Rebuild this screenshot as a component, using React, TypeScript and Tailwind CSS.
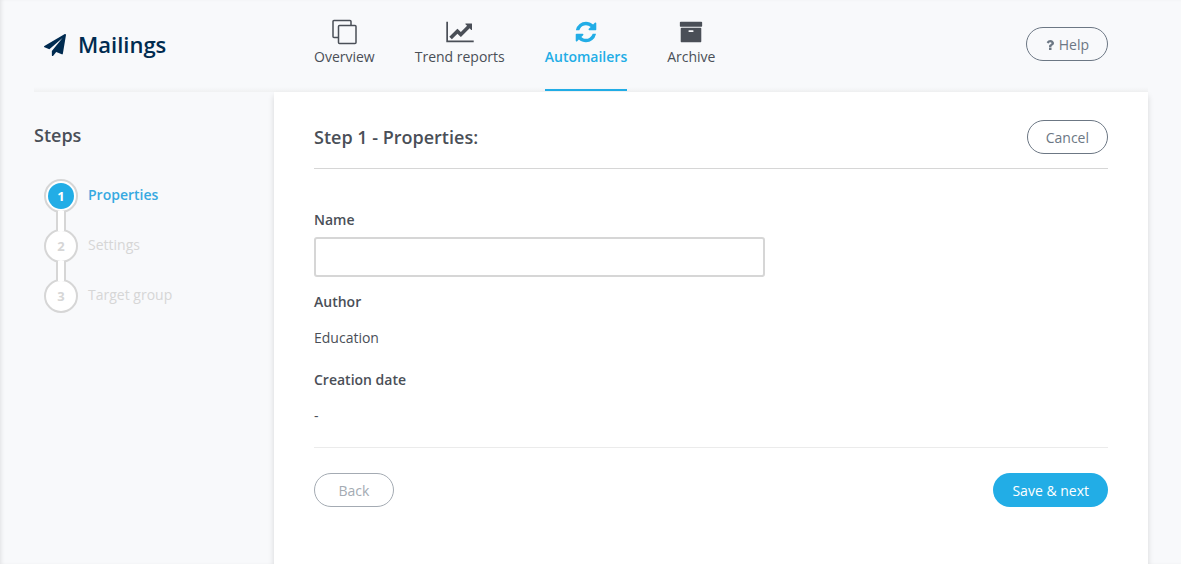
import { useState } from "react";
import type { ReactNode } from "react";

const STEPS = ["Properties", "Settings", "Target group"];

function PaperPlaneIcon() {
  return (
    <svg viewBox="0 0 1792 1792" className="h-[22px] w-[22px]" fill="currentColor" aria-hidden="true">
      <path d="M1764 11q33 24 27 64l-256 1536q-5 29-32 45-14 8-31 8-11 0-24-5l-453-185-242 295q-18 23-49 23-13 0-22-4-19-7-30.500-23.500t-11.500-36.500v-349l864-1059-1069 925-395-162q-37-14-40-55-2-40 32-59l1664-960q15-9 32-9 20 0 36 11z" />
    </svg>
  );
}

function OverviewIcon() {
  return (
    <svg viewBox="0 0 26 26" className="h-[26px] w-[26px]" fill="none" stroke="currentColor" strokeWidth="1.500" aria-hidden="true">
      <path d="M7 18.500H3a1 1 0 0 1-1-1v-15a1 1 0 0 1 1-1h16a1 1 0 0 1 1 1V6" />
      <rect x="7.500" y="6.500" width="17.500" height="18" rx="1" />
    </svg>
  );
}

function TrendIcon() {
  return (
    <svg viewBox="0 0 2048 1792" className="h-6 w-7" fill="currentColor" aria-hidden="true">
      <path d="M2048 1536v128h-2048v-1536h128v1408h1920zm-128-1248v435q0 21-19.500 29.500t-35.500-7.500l-121-121-633 633q-10 10-23 10t-23-10l-233-233-416 416-192-192 585-585q10-10 23-10t23 10l233 233 464-464-121-121q-16-16-7.500-35.500t29.500-19.500h435q14 0 23 9t9 23z" />
    </svg>
  );
}

function RefreshIcon() {
  return (
    <svg viewBox="0 0 1792 1792" className="h-6 w-6" fill="currentColor" aria-hidden="true">
      <path d="M1639 1056q0 5-1 7-64 268-268 434.500t-478 166.500q-146 0-282.500-55t-243.500-157l-129 129q-19 19-45 19t-45-19-19-45v-448q0-26 19-45t45-19h448q26 0 45 19t19 45-19 45l-137 137q71 66 161 102t187 36q134 0 250-65t186-179q11-17 53-117 8-23 30-23h192q13 0 22.500 9.500t9.500 22.500zm25-800v448q0 26-19 45t-45 19h-448q-26 0-45-19t-19-45 19-45l138-138q-148-137-349-137-134 0-250 65t-186 179q-11 17-53 117-8 23-30 23h-199q-13 0-22.500-9.500t-9.500-22.500v-7q65-268 270-434.500t480-166.500q146 0 284 55.500t245 156.500l130-129q19-19 45-19t45 19 19 45z" />
    </svg>
  );
}

function ArchiveIcon() {
  return (
    <svg viewBox="0 0 1792 1792" className="h-6 w-6" fill="currentColor" aria-hidden="true">
      <path d="M1088 832q0-26-19-45t-45-19h-256q-26 0-45 19t-19 45 19 45 45 19h256q26 0 45-19t19-45zm576-192v960q0 26-19 45t-45 19h-1408q-26 0-45-19t-19-45v-960q0-26 19-45t45-19h1408q26 0 45 19t19 45zm64-448v256q0 26-19 45t-45 19h-1536q-26 0-45-19t-19-45v-256q0-26 19-45t45-19h1536q26 0 45 19t19 45z" />
    </svg>
  );
}

function QuestionIcon() {
  return (
    <svg viewBox="0 0 1792 1792" className="h-3.5 w-3.5" fill="currentColor" aria-hidden="true">
      <path d="M1088 1256v240q0 16-12 28t-28 12h-240q-16 0-28-12t-12-28v-240q0-16 12-28t28-12h240q16 0 28 12t12 28zm316-600q0 54-15.500 101t-35 76.500-55 59.500-57.500 43.500-61 35.500q-41 23-68.500 65t-27.500 67q0 17-12 32.500t-28 15.500h-240q-15 0-25.500-18.500t-10.500-37.500v-45q0-83 65-156.500t143-108.500q59-27 84-56t25-76q0-42-46.500-74t-107.500-32q-65 0-108 29-35 25-107 115-13 16-31 16-12 0-25-8l-164-125q-13-10-15.500-25t5.500-28q160-266 464-266 80 0 161 31t146 83 106 127.500 41 158.500z" />
    </svg>
  );
}

const NAV = [
  { label: "Overview", icon: <OverviewIcon /> },
  { label: "Trend reports", icon: <TrendIcon /> },
  { label: "Automailers", icon: <RefreshIcon />, active: true },
  { label: "Archive", icon: <ArchiveIcon /> },
];

function NavItem({ label, icon, active }: { label: string; icon: ReactNode; active?: boolean }) {
  return (
    <a
      href="#"
      aria-current={active ? "page" : undefined}
      className={`flex h-[91px] flex-col items-center border-b-2 pt-[18px] ${
        active ? "border-[#22ade6] font-semibold text-[#22ade6]" : "border-transparent text-[#4a4f57]"
      }`}
    >
      <span className="flex h-7 items-center">{icon}</span>
      <span className="leading-[22px]">{label}</span>
    </a>
  );
}

function Stepper({ current }: { current: number }) {
  return (
    <ol className="mt-[31px] pl-2.5">
      {STEPS.map((step, i) => {
        const active = i === current;
        return (
          <li key={step} className="flex gap-2.5" aria-current={active ? "step" : undefined}>
            <div className="flex flex-col items-center">
              <span className="flex h-[34px] w-[34px] items-center justify-center rounded-full border-2 border-[#d6d6d6] bg-white">
                <span
                  className={`flex h-[26px] w-[26px] items-center justify-center rounded-full text-[13px] font-bold ${
                    active ? "bg-[#22ade6] text-white" : "text-[#d6d6d6]"
                  }`}
                >
                  {i + 1}
                </span>
              </span>
              {i < STEPS.length - 1 && (
                <span className="relative -my-0.5 h-5 w-2.5 border-x-2 border-[#d6d6d6] bg-white" />
              )}
            </div>
            <span className={`h-8 leading-8 ${active ? "font-semibold text-[#36a9e1]" : "text-[#d6d6d6]"}`}>
              {step}
            </span>
          </li>
        );
      })}
    </ol>
  );
}

export default function App() {
  const [name, setName] = useState("");

  return (
    <div className="flex min-h-screen flex-col bg-[#f8f9fb] pr-[33px] pl-[34px] font-['Open_Sans',sans-serif] text-sm text-[#4a4f57] shadow-[inset_3px_0_4px_-2px_rgba(0,0,0,0.1)]">
      <header className="flex h-[92px] bg-linear-to-t from-[#f0f1f2] to-transparent to-[5px] pr-10">
        <div className="flex w-60 shrink-0 items-center gap-3 pb-0.5 pl-2.5 text-[#002b50]">
          <PaperPlaneIcon />
          <h1 className="text-[22px] font-semibold">Mailings</h1>
        </div>
        <nav className="flex gap-10 pl-10">
          {NAV.map(item => (
            <NavItem key={item.label} {...item} />
          ))}
        </nav>
        <button className="mt-[27px] ml-auto flex h-[34px] items-center gap-0.5 rounded-full border border-[#6c7784] pt-0.5 pr-[18px] pl-4 text-[#6c7784]">
          <QuestionIcon /> Help
        </button>
      </header>

      <div className="flex flex-1">
        <aside className="w-60 shrink-0 pt-[30px]">
          <h2 className="text-lg leading-[26px] font-semibold">Steps</h2>
          <Stepper current={0} />
        </aside>

        <main className="flex-1 bg-white px-10 pt-7 shadow-[0_4px_6px_rgba(0,0,0,0.14)]">
          <div className="flex items-center justify-between border-b border-[#d6d6d6] pb-3.5">
            <h2 className="text-lg font-semibold">Step 1 - Properties:</h2>
            <button className="h-[34px] rounded-full border border-[#6c7784] px-[18px] pt-0.5 text-[#6c7784]">Cancel</button>
          </div>

          <form onSubmit={e => e.preventDefault()}>
            <div className="pt-10 pb-5">
              <label htmlFor="name" className="block leading-[22px] font-semibold">Name</label>
              <input
                id="name"
                value={name}
                onChange={e => setName(e.target.value)}
                className="mt-1.5 block h-10 w-[451px] max-w-full rounded-[3px] border-2 border-[#d6d6d6] bg-white px-3 outline-none focus:border-[#22ade6]"
              />
              <dl className="mt-3.5 leading-[22px]">
                <dt className="font-semibold">Author</dt>
                <dd className="mt-3.5">Education</dd>
                <dt className="mt-5 font-semibold">Creation date</dt>
                <dd className="mt-3.5">-</dd>
              </dl>
            </div>

            <div className="flex items-center justify-between border-t border-[#ebebeb] pt-[25px]">
              <button type="button" className="h-[34px] w-20 rounded-full border border-[#a4abb3] pt-0.5 text-[#a4abb3]">
                Back
              </button>
              <button type="submit" className="h-[34px] rounded-full bg-[#22ade6] px-[19px] pt-0.5 text-white">
                Save &amp; next
              </button>
            </div>
          </form>
        </main>
      </div>
    </div>
  );
}
